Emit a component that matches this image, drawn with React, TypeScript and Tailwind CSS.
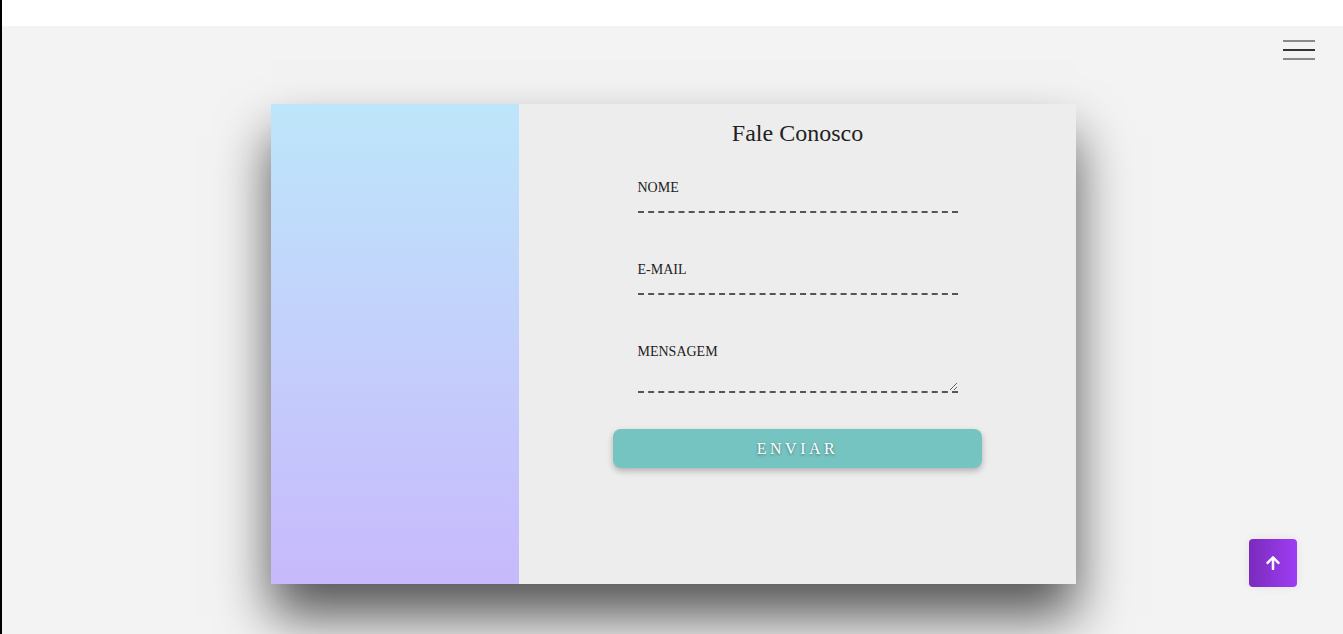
import React from "react";
import { FaArrowUp } from "react-icons/fa";

export default function App() {
  return (
    <div className="min-h-[634px] h-[634px] overflow-hidden flex flex-col border-l-2 border-black bg-white" style={{ fontFamily: '"Liberation Serif", "Times New Roman", serif' }}>
      <div className="h-[26px] bg-white shrink-0" />
      <div className="relative flex-1 bg-[#f3f3f3]">
        <button className="absolute top-[14px] right-[28px] w-[32px] h-[20px] flex flex-col justify-between">
          <span className="block h-[2px] w-full bg-[#8a8a8a]" />
          <span className="block h-[2px] w-full bg-[#333]" />
          <span className="block h-[2px] w-full bg-[#8a8a8a]" />
        </button>

        <div className="ml-[269px] mt-[78px] w-[805px] h-[480px] flex shadow-[0_32px_50px_rgba(0,0,0,0.65)]">
          <div className="w-[248px] h-full bg-gradient-to-b from-[#bde6fa] to-[#c7b9fc]" />
          <div className="flex-1 bg-[#ededed] flex flex-col items-center pt-[15px]">
            <h1 className="text-[24px] leading-[28px] text-[#222]">Fale Conosco</h1>
            <div className="w-[320px] mt-[33px] flex flex-col">
              <label className="text-[14px] leading-[16px] text-[#222]">NOME</label>
              <input className="h-[17px] w-full bg-transparent border-b-2 border-dashed border-[#555] outline-none" />
              <label className="mt-[49px] text-[14px] leading-[16px] text-[#222]">E-MAIL</label>
              <input className="h-[17px] w-full bg-transparent border-b-2 border-dashed border-[#555] outline-none" />
              <label className="mt-[49px] text-[14px] leading-[16px] text-[#222]">MENSAGEM</label>
              <textarea className="h-[33px] w-full bg-transparent border-b-2 border-dashed border-[#555] outline-none block" />
            </div>
            <button className="mt-[36px] w-[369px] h-[39px] rounded-[8px] bg-[#76c4c1] text-white text-[16px] tracking-[3.5px] shadow-[0_3px_6px_rgba(0,0,0,0.25)] [text-shadow:0_1px_3px_rgba(0,0,0,0.45)]">
              ENVIAR
            </button>
          </div>
        </div>

        <button className="absolute left-[1247px] top-[513px] w-[48px] h-[48px] rounded-[4px] bg-gradient-to-r from-[#7a2bbd] to-[#9e3df5] flex items-center justify-center text-white shadow-[0_0_8px_rgba(0,0,0,0.08)]">
          <FaArrowUp size={16} />
        </button>
      </div>
    </div>
  );
}
